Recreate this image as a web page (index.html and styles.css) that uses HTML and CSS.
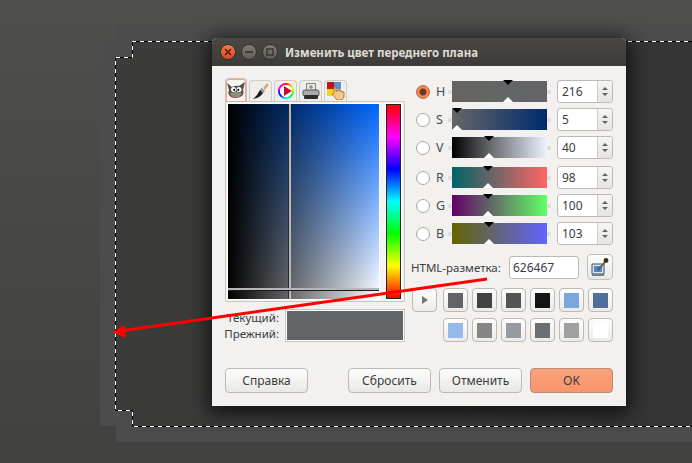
FILE: index.html
```html
<!DOCTYPE html>
<html>
  <head>
    <title>Изменить цвет переднего плана</title>
    <meta charset="utf-8"/>
    <link rel="stylesheet" href="styles.css">
  </head>
  <body>
    <!-- image canvas behind the dialog -->
    <svg class="backdrop" width="692" height="463" viewBox="0 0 692 463">
      <defs>
        <linearGradient id="outerFill" x1="0" y1="0" x2="0" y2="1">
          <stop offset="0" stop-color="#4f4f4e"/>
          <stop offset="0.5" stop-color="#474745"/>
          <stop offset="1" stop-color="#41413f"/>
        </linearGradient>
        <linearGradient id="innerFill" x1="0" y1="0" x2="1" y2="0">
          <stop offset="0" stop-color="#3b3b3a"/>
          <stop offset="0.55" stop-color="#3a3a39"/>
          <stop offset="1" stop-color="#343434"/>
        </linearGradient>
      </defs>
      <rect width="692" height="463" fill="url(#outerFill)"/>
      <path d="M116 25H692V41H132V57H116V410H132V426H692V442H116V426H100V41H116Z" fill="#4c4c4c"/>
      <path d="M692 41.5H132.5V57.5H115.5V410.5H132.5V426.5H692Z" fill="url(#innerFill)"/>
      <path d="M692 41.5H132.5V57.5H115.5V410.5H132.5V426.5H692" fill="none" stroke="#fff"/>
      <path d="M692 41.5H132.5V57.5H115.5V410.5H132.5V426.5H692" fill="none" stroke="#000" stroke-dasharray="4 4"/>
    </svg>

    <div class="dialog">
      <div class="titlebar">
        <span class="wbtn wbtn-close"><svg width="8" height="8" viewBox="0 0 8 8"><path d="M1 1L7 7M7 1L1 7" stroke="#5a1a08" stroke-width="1.6"/></svg></span>
        <span class="wbtn"><svg width="8" height="8" viewBox="0 0 8 8"><path d="M0 4H8" stroke="#35342f" stroke-width="1.6"/></svg></span>
        <span class="wbtn"><svg width="8" height="8" viewBox="0 0 8 8"><rect x="1" y="1" width="6" height="6" fill="none" stroke="#35342f" stroke-width="1.4"/></svg></span>
        <span class="title">Изменить цвет переднего плана</span>
      </div>

      <div class="content">
        <div class="main">
          <div class="left">
            <div class="tabs">
              <div class="tab tab-active">
                <svg width="18" height="17" viewBox="0 0 18 17">
                  <path d="M0 1L5 5Q9 3 12 4L18 0L16 8Q18 13 13 15Q8 17 4 15Q0 12 2 8Z" fill="#55514a"/>
                  <path d="M3 11Q9 9 15 11Q13 16 8 15.500Q4 15 3 11Z" fill="#918b7f"/>
                  <circle cx="6.500" cy="7.500" r="2.500" fill="#fff"/><circle cx="12" cy="7.500" r="2.500" fill="#fff"/>
                  <circle cx="7.200" cy="7.800" r="1.100" fill="#000"/><circle cx="11.300" cy="7.800" r="1.100" fill="#000"/>
                </svg>
              </div>
              <div class="tab">
                <svg width="18" height="18" viewBox="0 0 18 18">
                  <path d="M11 6L15 1L17 3L13 8Z" fill="#d8ab7a"/>
                  <path d="M9.500 6L13 9L11 11L8 8Z" fill="#8f9499"/>
                  <path d="M8 8L11 11Q8 16 1 17Q5 14 8 8Z" fill="#1b1b1b"/>
                </svg>
              </div>
              <div class="tab">
                <span class="wheel"><svg width="10" height="10" viewBox="0 0 10 10"><path d="M2 0L10 5L2 10Z" fill="#c3102c"/></svg></span>
              </div>
              <div class="tab">
                <svg width="18" height="17" viewBox="0 0 18 17">
                  <rect x="4.500" y="0.500" width="9" height="7" fill="#e6e6e4" stroke="#8a8a88"/>
                  <path d="M7 4H11M9 2V6" stroke="#777"/>
                  <rect x="1" y="7" width="16" height="6" rx="1.500" fill="#a9abaa" stroke="#555"/>
                  <rect x="2" y="12" width="14" height="4" rx="1" fill="#2d2d2d"/>
                </svg>
              </div>
              <div class="tab">
                <svg width="18" height="18" viewBox="0 0 18 18">
                  <rect x="0" y="0" width="7" height="7" fill="#c4121b"/>
                  <rect x="7" y="0" width="7" height="7" fill="#5b8fd0"/>
                  <rect x="0" y="7" width="7" height="7" fill="#f0d41e"/>
                  <rect x="7" y="7" width="7" height="7" fill="#b9c7d8"/>
                  <path d="M7 9V5H9V9H11V8H13V9H15V10H17V15Q16 18 13 18H10L5 12L7 11Z" fill="#f3c888" stroke="#a9661f" stroke-width="0.800"/>
                </svg>
              </div>
            </div>
            <div class="notebook">
              <div class="square">
                <span class="cross-v"></span>
                <span class="cross-h"></span>
              </div>
              <div class="hue"></div>
            </div>
            <div class="compare">
              <div class="compare-labels">
                <span>Текущий:</span>
                <span>Прежний:</span>
              </div>
              <div class="compare-swatch"></div>
            </div>
          </div>

          <div class="right">
            <div class="row">
              <span class="radio radio-on"></span><span class="letter">H</span>
              <div class="slider slider-h"><i class="mark" style="left:56px"></i></div>
              <div class="spin"><span class="spin-val">216</span><span class="spin-btns"><b class="up"></b><b class="down"></b></span></div>
            </div>
            <div class="row">
              <span class="radio"></span><span class="letter">S</span>
              <div class="slider slider-s"><i class="mark" style="left:5px"></i></div>
              <div class="spin"><span class="spin-val">5</span><span class="spin-btns"><b class="up"></b><b class="down"></b></span></div>
            </div>
            <div class="row">
              <span class="radio"></span><span class="letter">V</span>
              <div class="slider slider-v"><i class="mark" style="left:37px"></i></div>
              <div class="spin"><span class="spin-val">40</span><span class="spin-btns"><b class="up"></b><b class="down"></b></span></div>
            </div>
            <div class="row row-rgb">
              <span class="radio"></span><span class="letter">R</span>
              <div class="slider slider-r"><i class="mark" style="left:36px"></i></div>
              <div class="spin"><span class="spin-val">98</span><span class="spin-btns"><b class="up"></b><b class="down"></b></span></div>
            </div>
            <div class="row">
              <span class="radio"></span><span class="letter">G</span>
              <div class="slider slider-g"><i class="mark" style="left:36px"></i></div>
              <div class="spin"><span class="spin-val">100</span><span class="spin-btns"><b class="up"></b><b class="down"></b></span></div>
            </div>
            <div class="row">
              <span class="radio"></span><span class="letter">B</span>
              <div class="slider slider-b"><i class="mark" style="left:37px"></i></div>
              <div class="spin"><span class="spin-val">103</span><span class="spin-btns"><b class="up"></b><b class="down"></b></span></div>
            </div>

            <div class="html-row">
              <span class="html-label">HTML-разметка:</span>
              <span class="html-entry">626467</span>
              <span class="picker">
                <svg width="20" height="20" viewBox="0 0 20 20">
                  <path d="M2 7H14V17H2Z" fill="#dfe3e6" stroke="#33506f"/>
                  <rect x="4" y="9" width="8" height="6" fill="#4f86c6"/>
                  <path d="M2 17H14V19H2Z" fill="#6d7f92"/>
                  <path d="M8 13L15 5" stroke="#555" stroke-width="1.600"/>
                  <circle cx="16" cy="3.500" r="2.400" fill="#3a3016"/>
                </svg>
              </span>
            </div>

            <div class="palette">
              <span class="cell cell-arrow"><svg width="6" height="8" viewBox="0 0 6 8"><path d="M0 0L6 4L0 8Z" fill="#77756f"/></svg></span>
              <span class="cell"><i class="c1"></i></span>
              <span class="cell"><i class="c2"></i></span>
              <span class="cell"><i class="c3"></i></span>
              <span class="cell"><i class="c4"></i></span>
              <span class="cell"><i class="c5"></i></span>
              <span class="cell"><i class="c6"></i></span>
              <span class="cell-gap"></span>
              <span class="cell"><i class="c7"></i></span>
              <span class="cell"><i class="c8"></i></span>
              <span class="cell"><i class="c9"></i></span>
              <span class="cell"><i class="c10"></i></span>
              <span class="cell"><i class="c11"></i></span>
              <span class="cell"><i class="c12"></i></span>
            </div>
          </div>
        </div>

        <div class="actions">
          <span class="btn btn-help">Справка</span>
          <span class="btn">Сбросить</span>
          <span class="btn">Отменить</span>
          <span class="btn btn-ok">OK</span>
        </div>
      </div>
    </div>

    <!-- red annotation over everything -->
    <svg class="annotation" width="692" height="463" viewBox="0 0 692 463">
      <path d="M487 279L120 331" stroke="#f00" stroke-width="3" fill="none"/>
      <path d="M112 332L125 325L126 338Z" fill="#f00"/>
    </svg>
  </body>
</html>
```

FILE: styles.css
```css
html, body {
  margin: 0;
  padding: 0;
}
body {
  position: relative;
  width: 692px;
  height: 463px;
  overflow: hidden;
  background: #444442;
  font-family: "Noto Sans", "Open Sans", sans-serif;
  font-size: 12px;
  color: #3c3c3c;
}
.backdrop, .annotation {
  position: absolute;
  left: 0;
  top: 0;
  display: block;
}

/* dialog window */
.dialog {
  position: absolute;
  left: 212px;
  top: 38px;
  width: 414px;
  height: 368px;
  display: flex;
  flex-direction: column;
  border-radius: 5px 5px 0 0;
  background: #f2f1ef;
  box-shadow: 0 4px 20px 4px rgba(0, 0, 0, .7);
}
.titlebar {
  height: 28px;
  flex: none;
  display: flex;
  align-items: center;
  gap: 5px;
  padding-left: 8px;
  border-radius: 5px 5px 0 0;
  background: linear-gradient(#4a4843, #3c3b37);
}
.wbtn {
  width: 14px;
  height: 14px;
  display: flex;
  align-items: center;
  justify-content: center;
  border-radius: 50%;
  border: 0.5px solid #35342f;
  background: linear-gradient(#7f7d76, #5f5d57);
}
.wbtn-close {
  background: linear-gradient(#f27b52, #d9471d);
}
.title {
  margin-left: 2px;
  font-size: 11.5px;
  font-weight: 700;
  color: #dfdbd2;
  white-space: nowrap;
}
.content {
  flex: 1;
  display: flex;
  flex-direction: column;
  padding: 12px 13px 13px;
}
.main {
  display: flex;
  gap: 6px;
}
.left {
  width: 180px;
  flex: none;
}

/* tabs */
.tabs {
  display: flex;
  gap: 2px;
  height: 23px;
}
.tab {
  width: 23px;
  height: 21px;
  margin-top: 2px;
  box-sizing: border-box;
  display: flex;
  align-items: center;
  justify-content: center;
  border: 1px solid #cfccc6;
  border-bottom: 0;
  border-radius: 4px 4px 0 0;
  background: #efeeec;
}
.tab-active {
  width: 22px;
  height: 24px;
  margin-top: 0;
  position: relative;
  z-index: 1;
  border: 1px solid #c6c3bd;
  border-bottom: 0;
  box-shadow: inset 0 0 0 1px #f4a585;
  background: #f4f3f1;
}
.wheel {
  width: 16px;
  height: 16px;
  box-sizing: border-box;
  display: flex;
  align-items: center;
  justify-content: center;
  padding-left: 2px;
  border-radius: 50%;
  background: radial-gradient(#fff 52%, transparent 56%), conic-gradient(#f00, #ff0, #0f0, #0ff, #00f, #f0f, #f00);
}
.notebook {
  box-sizing: border-box;
  width: 180px;
  height: 201px;
  display: flex;
  gap: 7px;
  padding: 2px;
  border: 1px solid #c9c6c0;
  border-radius: 2px;
  background: #f4f3f1;
}
.square {
  position: relative;
  width: 151px;
  height: 195px;
  flex: none;
  outline: 1px solid #fff;
  background: linear-gradient(to right, #000, rgba(0, 0, 0, 0)), linear-gradient(#0066ff, #fff);
}
.cross-v {
  position: absolute;
  left: 60px;
  top: 0;
  bottom: 0;
  width: 3px;
  background: #b5b7ba;
  border-left: 1px solid #2a2a2a;
  box-sizing: border-box;
}
.cross-h {
  position: absolute;
  left: 0;
  right: 0;
  top: 184px;
  height: 3px;
  box-sizing: border-box;
  border-top: 2px solid #b5b7ba;
  border-bottom: 1px solid #1c1c1c;
}
.hue {
  box-sizing: border-box;
  width: 15px;
  height: 195px;
  border: 1px solid #222;
  outline: 1px solid #fff;
  background: linear-gradient(#f00, #f0f 16.7%, #00f 33.3%, #0ff 50%, #0f0 66.7%, #ff0 83.3%, #f00);
}
.compare {
  display: flex;
  margin-top: 7px;
  height: 33px;
}
.compare-labels {
  width: 54px;
  display: flex;
  flex-direction: column;
  align-items: flex-end;
  justify-content: space-between;
  padding: 1px 0 0;
  font-size: 11.5px;
  line-height: 16px;
}
.compare-swatch {
  box-sizing: border-box;
  width: 120px;
  margin-left: 6px;
  border: 1px solid #c9c6c0;
  outline: 1px solid #fff;
  outline-offset: -2px;
  background: #626467;
}

/* sliders on the right */
.right {
  width: 202px;
  padding-top: 2px;
}
.row {
  display: flex;
  align-items: center;
  height: 23px;
  margin-bottom: 5px;
}
.row-rgb {
  margin-top: 7px;
}
.radio {
  box-sizing: border-box;
  width: 14px;
  height: 14px;
  margin-left: 5px;
  border: 1px solid #aaa7a1;
  border-radius: 50%;
  background: #fff;
}
.radio-on {
  border-color: #c6623a;
  background: radial-gradient(circle, #6e3a26 0 3px, #f08a5e 4px);
}
.letter {
  width: 16px;
  margin-left: 6px;
  font-size: 12.5px;
  color: #4a4a4a;
}
.slider {
  position: relative;
  width: 95px;
  height: 21px;
  margin-right: 10px;
}
.slider::before, .slider::after {
  content: "";
  position: absolute;
  top: 9px;
  width: 4px;
  height: 4px;
  border-radius: 2px;
  background: #dddbd7;
}
.slider::before {
  left: -4px;
}
.slider::after {
  right: -4px;
}
.slider-h { background: linear-gradient(to right, #676260, #626762 33%, #62656a 66%, #676266); }
.slider-s { background: linear-gradient(to right, #666, #002a6e); }
.slider-v { background: linear-gradient(to right, #000, #6a6c70 42%, #edf3ff); }
.slider-r { background: linear-gradient(to right, #006467, #ff6467); }
.slider-g { background: linear-gradient(to right, #620067, #62ff67); }
.slider-b { background: linear-gradient(to right, #626400, #6264ff); }
.mark {
  position: absolute;
  top: 0;
  bottom: 0;
  width: 0;
}
.mark::before, .mark::after {
  content: "";
  position: absolute;
  left: -5px;
  border-left: 5px solid transparent;
  border-right: 5px solid transparent;
}
.mark::before {
  top: -1px;
  border-top: 5px solid #000;
}
.mark::after {
  bottom: 0;
  border-bottom: 5px solid #fff;
}
.spin {
  box-sizing: border-box;
  width: 56px;
  height: 23px;
  display: flex;
  border: 1px solid #bdbab4;
  border-radius: 3px;
  background: #fff;
}
.spin-val {
  flex: 1;
  padding-left: 4px;
  line-height: 21px;
}
.spin-btns {
  width: 14px;
  display: flex;
  flex-direction: column;
  align-items: center;
  justify-content: center;
  gap: 3px;
  border-left: 1px solid #cfccc6;
  border-radius: 0 3px 3px 0;
  background: linear-gradient(#f7f6f5, #e6e4e1);
}
.up, .down {
  width: 0;
  border-left: 3px solid transparent;
  border-right: 3px solid transparent;
}
.up {
  border-bottom: 3px solid #66645f;
}
.down {
  border-top: 3px solid #66645f;
}

/* html notation */
.html-row {
  display: flex;
  align-items: center;
  margin-top: 9px;
  height: 26px;
}
.html-label {
  width: 98px;
  flex: none;
  white-space: nowrap;
  font-size: 11.5px;
}
.html-entry {
  box-sizing: border-box;
  width: 70px;
  height: 23px;
  padding-left: 3px;
  line-height: 21px;
  border: 1px solid #bdbab4;
  border-radius: 3px;
  background: #fff;
}
.picker {
  box-sizing: border-box;
  width: 26px;
  height: 26px;
  margin-left: 8px;
  display: flex;
  align-items: center;
  justify-content: center;
  border: 1px solid #c4c1bb;
  border-radius: 4px;
  background: linear-gradient(#fdfdfd, #e9e8e5);
}

/* swatches */
.palette {
  display: grid;
  grid-template-columns: 27px repeat(6, 25px);
  grid-auto-rows: 24px;
  column-gap: 4px;
  row-gap: 6px;
  margin-top: 8px;
  margin-left: 1px;
}
.cell {
  box-sizing: border-box;
  display: flex;
  align-items: center;
  justify-content: center;
  border: 1px solid #bdbab4;
  border-radius: 4px;
  background: linear-gradient(#fdfdfd, #ecebe8);
}
.cell-arrow {
  width: 25px;
}
.cell i {
  width: 15px;
  height: 15px;
  display: block;
}
.c1 { background: #626467; }
.c2 { background: #434343; }
.c3 { background: #555; }
.c4 { background: #141414; }
.c5 { background: #79a6dc; }
.c6 { background: #4f6e9b; }
.c7 { background: #94bae9; }
.c8 { background: #868686; }
.c9 { background: #979aa3; }
.c10 { background: #6c6f70; }
.c11 { background: #a0a0a0; }
.c12 { background: #fff; }

/* bottom buttons */
.actions {
  display: flex;
  gap: 8px;
  margin-top: 26px;
}
.btn {
  box-sizing: border-box;
  width: 83px;
  height: 25px;
  display: flex;
  align-items: center;
  justify-content: center;
  border: 1px solid #bdbab4;
  border-radius: 4px;
  background: linear-gradient(#fdfdfd, #e9e8e5);
}
.btn-help {
  margin-right: 32px;
}
.btn-ok {
  border-color: #b98a74;
  background: linear-gradient(#fba27e, #f8946c);
}
```
